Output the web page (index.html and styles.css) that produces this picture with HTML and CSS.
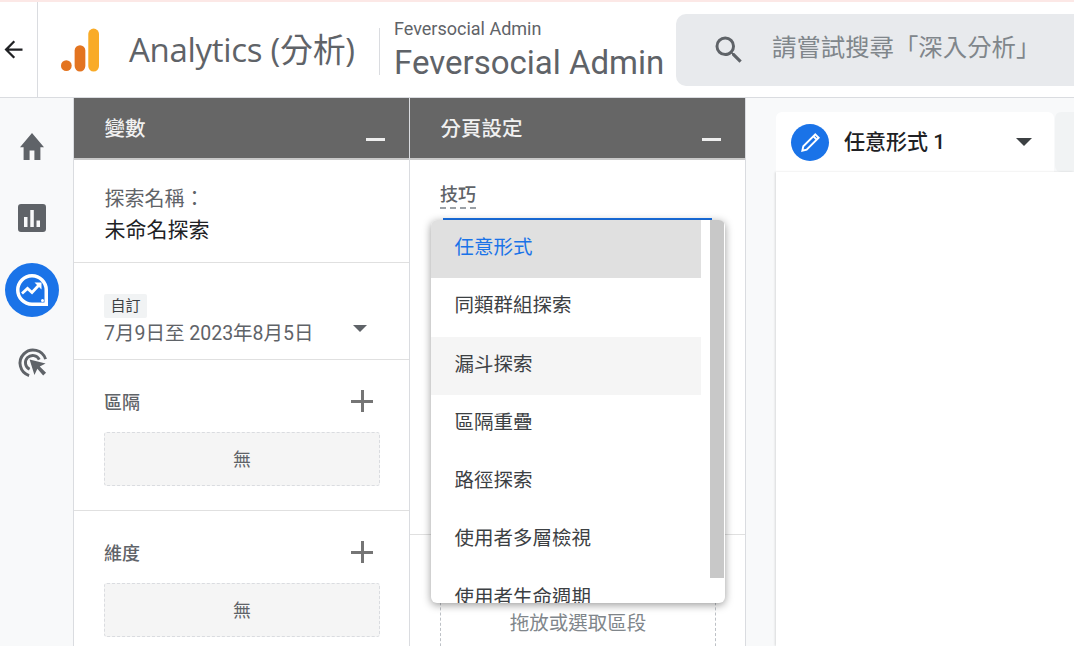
FILE: index.html
```html
<!DOCTYPE html>
<html lang="zh-Hant">
<head>
<meta charset="utf-8">
<title>Analytics</title>
<link rel="stylesheet" href="styles.css">
</head>
<body>
<div class="app">
  <div class="strip"></div>
  <header class="topbar">
    <div class="back">
      <svg class="back-icon" viewBox="0 0 24 24"><path d="M20 11H7.830l5.590-5.590L12 4l-8 8 8 8 1.410-1.410L7.830 13H20z"/></svg>
    </div>
    <svg class="logo" viewBox="0 0 40 46">
      <circle cx="6.500" cy="38" r="5.500" fill="#e37420"/>
      <rect x="15" y="17" width="11" height="27" rx="5.500" fill="#e37420"/>
      <rect x="29" y="0" width="11" height="44" rx="5.500" fill="#f9ab27"/>
    </svg>
    <div class="product">Analytics (分析)</div>
    <div class="account">
      <div class="account-small">Feversocial Admin</div>
      <div class="account-big">Feversocial Admin</div>
    </div>
    <div class="search">
      <svg class="search-icon" viewBox="0 0 24 24"><path d="M15.500 14h-.790l-.280-.270A6.470 6.470 0 0 0 16 9.500 6.500 6.500 0 1 0 9.500 16c1.610 0 3.090-.590 4.230-1.570l.270.280v.790l5 4.990L20.490 19l-4.990-5zm-6 0C7.010 14 5 11.990 5 9.500S7.010 5 9.500 5 14 7.010 14 9.500 11.990 14 9.500 14z"/></svg>
      <span class="search-text">請嘗試搜尋「深入分析」</span>
    </div>
  </header>
  <div class="main">
    <nav class="rail">
      <div class="rail-item">
        <svg class="i-home" viewBox="2 3 20 17" preserveAspectRatio="none"><path d="M10 20v-6h4v6h5v-8h3L12 3 2 12h3v8z"/></svg>
      </div>
      <div class="rail-item">
        <svg class="i-chart" viewBox="0 0 28 28"><path fill-rule="evenodd" d="M3 0h22a3 3 0 0 1 3 3v22a3 3 0 0 1-3 3H3a3 3 0 0 1-3-3V3a3 3 0 0 1 3-3zM6 13v10h3.500V13zM12.300 6v17h3.500V6zM18.500 16.500V23H22v-6.500z"/></svg>
      </div>
      <div class="rail-item">
        <div class="explore-dot">
          <svg class="i-explore" viewBox="0 0 32 32">
            <path d="M16 1.750a14.250 14.250 0 1 0 0 28.500h14.250V16A14.250 14.250 0 0 0 16 1.750z" fill="none" stroke="#fff" stroke-width="3.500"/>
            <path d="M6 19.500l5.500-5 4.500 4 7-7.500" fill="none" stroke="#fff" stroke-width="2.800"/>
            <path d="M18.500 8.500h7v7z" fill="#fff"/>
            <circle cx="26.500" cy="26.500" r="1.500" fill="#fff"/>
          </svg>
        </div>
      </div>
      <div class="rail-item">
        <svg class="i-ads" viewBox="0 0 32 32">
          <path d="M12.500 29.500A13.500 13.500 0 1 1 29.500 12.500" fill="none" stroke="#5f6368" stroke-width="3"/>
          <path d="M13 23A7.500 7.500 0 1 1 23 13" fill="none" stroke="#5f6368" stroke-width="3"/>
          <path d="M13 13l5 16 3-6.500 6 7 3-3-6.500-6.500 6-3z" fill="#5f6368"/>
        </svg>
      </div>
    </nav>

    <section class="panel panel-vars">
      <div class="panel-head"><span>變數</span><i class="minus"></i></div>
      <div class="block block-name">
        <div class="label">探索名稱：</div>
        <div class="name">未命名探索</div>
      </div>
      <div class="block block-date">
        <span class="tag">自訂</span>
        <div class="date-row">
          <span class="date">7月9日至 2023年8月5日</span>
          <i class="caret caret-date"></i>
        </div>
      </div>
      <div class="block block-group">
        <div class="group-head"><span>區隔</span><i class="plus"></i></div>
        <div class="empty">無</div>
      </div>
      <div class="block block-group last">
        <div class="group-head"><span>維度</span><i class="plus"></i></div>
        <div class="empty">無</div>
      </div>
    </section>

    <section class="panel panel-tab">
      <div class="panel-head"><span>分頁設定</span><i class="minus"></i></div>
      <div class="block block-tech">
        <span class="tech-label">技巧</span>
        <div class="field-line"></div>
      </div>
      <div class="block-drop">
        <div class="drop-zone">拖放或選取區段</div>
      </div>
      <div class="menu">
        <ul class="menu-list">
          <li class="selected">任意形式</li>
          <li>同類群組探索</li>
          <li class="hover">漏斗探索</li>
          <li>區隔重疊</li>
          <li>路徑探索</li>
          <li>使用者多層檢視</li>
          <li>使用者生命週期</li>
        </ul>
        <div class="scroll-thumb"></div>
      </div>
    </section>

    <section class="canvas">
      <div class="tabs">
        <div class="tab">
          <span class="tab-badge">
            <svg class="i-pencil" viewBox="0 0 24 24"><path d="M17 3.500l3.500 3.500L8 19.500 3.500 20.500 4.500 16z" fill="none" stroke="#fff" stroke-width="2"/><path d="M15 5.500l3.500 3.500" stroke="#fff" stroke-width="2"/></svg>
          </span>
          <span class="tab-title">任意形式 1</span>
          <i class="caret caret-tab"></i>
        </div>
        <div class="tab-next"></div>
      </div>
      <div class="sheet"></div>
    </section>
  </div>
</div>
</body>
</html>
```
FILE: styles.css
```css
* { box-sizing: border-box; }
html, body { margin: 0; padding: 0; height: 100%; overflow: hidden; }
body { font-family: Roboto, "Noto Sans CJK TC", sans-serif; background: #fff; color: #3c4043; }
.app { width: 1074px; height: 646px; display: flex; flex-direction: column; overflow: hidden; }
.strip { height: 2px; background: #fce8e6; flex: none; }

.topbar { height: 96px; flex: none; display: flex; align-items: flex-start; border-bottom: 1px solid #dadce0; }
.back { width: 38px; height: 95px; border-right: 1px solid #dadce0; display: flex; align-items: center; flex: none; }
.back-icon { width: 27px; height: 27px; fill: #202124; flex: none; }
.logo { width: 39px; height: 46px; margin: 26px 0 0 22px; flex: none; }
.product { font-family: "Open Sans", "Noto Sans CJK TC", sans-serif; font-size: 33px; line-height: 44px; margin: 26px 0 0 30px; width: 251px; height: 47px; flex: none; color: #5f6368; border-right: 1px solid #dadce0; white-space: nowrap; letter-spacing: -0.300px; }
.account { margin: 16px 0 0 14px; width: 282px; flex: none; color: #5f6368; white-space: nowrap; }
.account-small { font-size: 18px; line-height: 22px; }
.account-big { font-size: 33px; line-height: 40px; margin-top: 3px; }
.search { flex: 1; height: 72px; margin-top: 12px; background: #e8eaed; border-radius: 10px 0 0 10px; display: flex; align-items: center; padding-left: 35px; }
.search-icon { width: 36px; height: 36px; fill: #5f6368; flex: none; }
.search-text { font-size: 24.400px; line-height: 32px; margin: -4px 0 0 25px; color: #80868b; white-space: nowrap; }

.main { flex: 1; display: flex; min-height: 0; }
.rail { width: 74px; flex: none; background: #f8f9fa; border-right: 1px solid #dadce0; padding-top: 12px; display: flex; flex-direction: column; }
.rail-item { height: 72px; display: flex; align-items: center; justify-content: center; flex: none; padding-right: 9px; }
.i-home { width: 24px; height: 27px; fill: #5f6368; }
.i-chart { width: 28px; height: 28px; fill: #5f6368; }
.explore-dot { width: 54px; height: 54px; border-radius: 50%; background: #1a73e8; display: flex; align-items: center; justify-content: center; flex: none; }
.i-explore { width: 32px; height: 32px; }
.i-ads { width: 31px; height: 31px; }

.panel { width: 336px; flex: none; border-right: 1px solid #dadce0; position: relative; display: flex; flex-direction: column; background: #fff; }
.panel-head { height: 62px; flex: none; background: #666; border-bottom: 2px solid #c9c9c9; color: #f1f1f1; font-size: 20.500px; font-weight: 500; padding: 16px 0 0 30.500px; line-height: 30px; position: relative; }
.minus { position: absolute; right: 24px; top: 40px; width: 19px; height: 3px; background: #eee; }

.block { border-bottom: 1px solid #e0e0e0; padding-left: 30px; flex: none; }
.block-name { height: 103px; padding-top: 25px; }
.label { font-size: 20px; line-height: 28px; color: #5f6368; margin-left: 0.500px; }
.name { font-size: 21px; line-height: 30px; margin: 2px 0 0 0.500px; color: #202124; }
.block-date { height: 97px; padding-top: 31px; position: relative; }
.tag { display: inline-block; height: 24px; line-height: 24px; padding: 0 6.500px; background: #f1f3f4; font-size: 15px; color: #3c4043; border-radius: 2px; vertical-align: top; }
.date-row { display: flex; align-items: center; height: 26px; }
.date { font-size: 19.500px; color: #5f6368; white-space: nowrap; }
.caret { display: block; width: 0; height: 0; border-left: 7px solid transparent; border-right: 7px solid transparent; border-top: 7px solid #5f6368; flex: none; }
.caret-date { margin-left: 39px; margin-top: -5px; }
.block-group { height: 151px; padding-top: 29px; }
.block-group.last { border-bottom: none; height: auto; }
.group-head { display: flex; justify-content: space-between; align-items: center; height: 24px; padding-right: 36px; font-size: 18px; font-weight: 500; color: #5f6368; }
.plus { width: 22px; height: 22px; display: block; background: linear-gradient(#757575, #757575) center / 22px 3px no-repeat, linear-gradient(#757575, #757575) center / 3px 22px no-repeat; }
.empty { width: 276px; height: 54px; margin-top: 19px; padding-bottom: 2px; background: #f5f5f5; border: 1px dashed #dadce0; border-radius: 3px; display: flex; align-items: center; justify-content: center; font-size: 18px; color: #5f6368; }

.block-tech { height: 375px; padding-top: 20px; }
.tech-label { display: block; width: 36px; font-size: 18px; line-height: 30px; color: #5f6368; font-weight: 500; border-bottom: 2px dashed #9aa0a6; height: 29px; white-space: nowrap; }
.field-line { height: 1.500px; background: #1a73e8; margin: 9px 33px 0 3px; }
.block-drop { flex: 1; padding: 57px 29px 0 30px; }
.drop-zone { height: 80px; border: 1px dashed #bdc1c6; border-bottom: none; padding-top: 18px; text-align: center; font-size: 19.500px; color: #80868b; line-height: 26px; white-space: nowrap; }

.menu { position: absolute; left: 21px; top: 122px; width: 294px; height: 383px; background: #fff; border-radius: 6px; box-shadow: 0 2px 8px rgba(0,0,0,.4); overflow: hidden; }
.menu-list { list-style: none; margin: 0; padding: 0; width: 270px; }
.menu-list li { height: 58.300px; padding: 13px 0 0 23.500px; font-size: 19.500px; line-height: 30px; color: #3c4043; white-space: nowrap; }
.menu-list .selected { background: #e0e0e0; color: #1a73e8; }
.menu-list .hover { background: #f5f5f5; }
.scroll-thumb { position: absolute; right: 1px; top: 0; width: 14px; height: 358px; background: #c8c8c8; }

.canvas { flex: 1; background: #f8f9fa; padding: 14px 0 0 30px; min-width: 0; display: flex; flex-direction: column; }
.tabs { display: flex; height: 60px; flex: none; }
.tab { width: 278px; height: 60px; background: #fff; border-radius: 6px 6px 0 0; display: flex; align-items: flex-start; padding: 12px 0 0 15px; }
.tab-badge { width: 38px; height: 37px; border-radius: 50%; background: #1a73e8; display: flex; align-items: center; justify-content: center; flex: none; }
.i-pencil { width: 23px; height: 23px; }
.tab-title { font-size: 21px; font-weight: 500; color: #202124; margin-left: 15px; line-height: 36px; white-space: nowrap; }
.caret-tab { border-left-width: 8px; border-right-width: 8px; border-top-width: 8px; border-top-color: #3c4043; margin: 14px 22px 0 auto; }
.tab-next { flex: 1; margin-left: 1px; background: #f1f3f4; border-radius: 6px 0 0 6px; height: 60px; }
.sheet { flex: 1; background: #fff; box-shadow: -1px 0 2px rgba(0,0,0,.12); }
```
